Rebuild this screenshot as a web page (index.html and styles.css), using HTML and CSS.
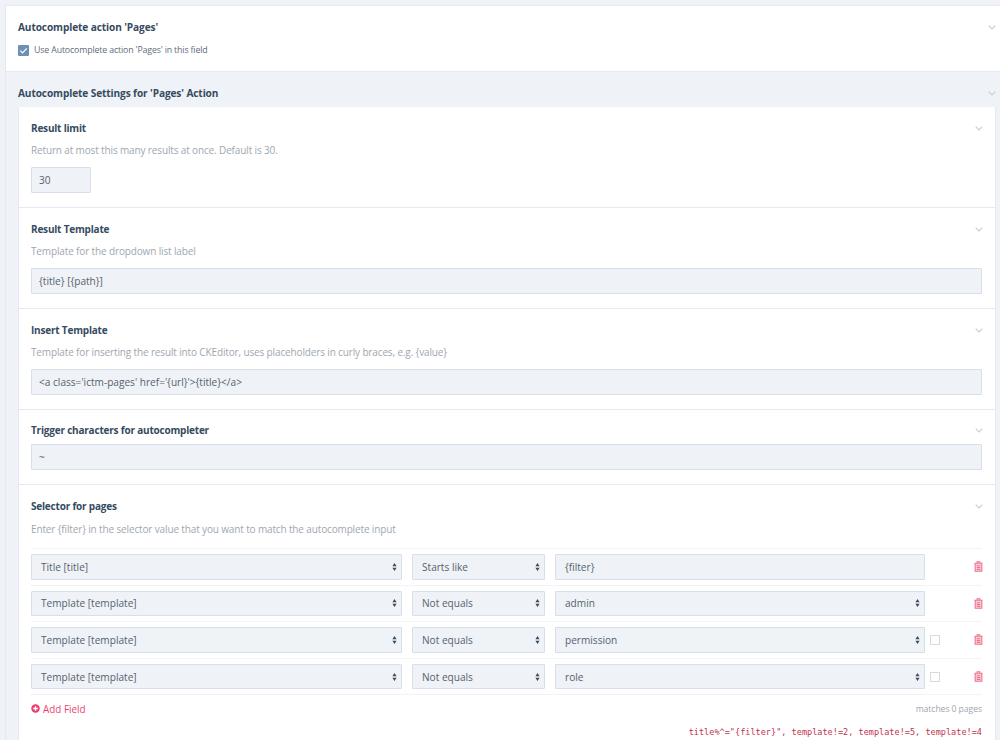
FILE: index.html
```html
<!DOCTYPE html>
<html lang="en">
<head>
<meta charset="utf-8">
<title>Autocomplete action 'Pages'</title>
<link rel="stylesheet" href="styles.css">
</head>
<body>
<svg class="defs" width="0" height="0" aria-hidden="true">
  <symbol id="chev" viewBox="0 0 8 5"><path d="M.7.7 4 3.9 7.3.7" fill="none" stroke="currentColor" stroke-width="1.1"/></symbol>
  <symbol id="sort" viewBox="0 0 6 10"><path d="M3 0 5.6 4H.4ZM3 10 .4 6h5.2Z" fill="currentColor"/></symbol>
  <symbol id="trash" viewBox="0 0 10 12"><path d="M1.3 2.6h7.4v8.6H1.3Z" fill="currentColor" fill-opacity=".3"/><path d="M3.5 1.8V.7h3v1.1M.5 2.3h9M1.3 2.6v8.6h7.4V2.6M3 5.2h4M3 7.2h4M3 9.2h4" fill="none" stroke="currentColor" stroke-width="1.2"/></symbol>
</svg>
<main class="page">
  <section class="panel panel-top">
    <header class="head"><h2>Autocomplete action 'Pages'</h2><svg class="chev"><use href="#chev"/></svg></header>
    <label class="check-line">
      <span class="check"><svg viewBox="0 0 12 12"><path d="M2.6 6.2 5 8.6l4.6-5" fill="none" stroke="#fff" stroke-width="1.3"/></svg></span>
      Use Autocomplete action 'Pages' in this field
    </label>
  </section>

  <section class="panel panel-settings">
    <header class="head head-settings"><h2>Autocomplete Settings for 'Pages' Action</h2><svg class="chev"><use href="#chev"/></svg></header>
    <div class="fields">
      <section class="field f-limit">
        <header class="head"><h3>Result limit</h3><svg class="chev"><use href="#chev"/></svg></header>
        <p class="desc">Return at most this many results at once. Default is 30.</p>
        <div class="input input-short">30</div>
      </section>
      <section class="field f-std">
        <header class="head"><h3>Result Template</h3><svg class="chev"><use href="#chev"/></svg></header>
        <p class="desc">Template for the dropdown list label</p>
        <div class="input">{title} [{path}]</div>
      </section>
      <section class="field f-std">
        <header class="head"><h3>Insert Template</h3><svg class="chev"><use href="#chev"/></svg></header>
        <p class="desc">Template for inserting the result into CKEditor, uses placeholders in curly braces, e.g. {value}</p>
        <div class="input">&lt;a class='ictm-pages' href='{url}'&gt;{title}&lt;/a&gt;</div>
      </section>
      <section class="field f-trigger">
        <header class="head"><h3>Trigger characters for autocompleter</h3><svg class="chev"><use href="#chev"/></svg></header>
        <div class="input">~</div>
      </section>
      <section class="field f-selector">
        <header class="head"><h3>Selector for pages</h3><svg class="chev"><use href="#chev"/></svg></header>
        <p class="desc">Enter {filter} in the selector value that you want to match the autocomplete input</p>
        <div class="rows">
          <div class="row">
            <div class="input select">Title [title]<svg class="sort"><use href="#sort"/></svg></div>
            <div class="input select">Starts like<svg class="sort"><use href="#sort"/></svg></div>
            <div class="input value">{filter}</div>
            <span></span>
            <svg class="trash"><use href="#trash"/></svg>
          </div>
          <div class="row">
            <div class="input select">Template [template]<svg class="sort"><use href="#sort"/></svg></div>
            <div class="input select">Not equals<svg class="sort"><use href="#sort"/></svg></div>
            <div class="input select value">admin<svg class="sort"><use href="#sort"/></svg></div>
            <span></span>
            <svg class="trash"><use href="#trash"/></svg>
          </div>
          <div class="row">
            <div class="input select">Template [template]<svg class="sort"><use href="#sort"/></svg></div>
            <div class="input select">Not equals<svg class="sort"><use href="#sort"/></svg></div>
            <div class="input select value">permission<svg class="sort"><use href="#sort"/></svg></div>
            <span class="box"></span>
            <svg class="trash"><use href="#trash"/></svg>
          </div>
          <div class="row">
            <div class="input select">Template [template]<svg class="sort"><use href="#sort"/></svg></div>
            <div class="input select">Not equals<svg class="sort"><use href="#sort"/></svg></div>
            <div class="input select value">role<svg class="sort"><use href="#sort"/></svg></div>
            <span class="box"></span>
            <svg class="trash"><use href="#trash"/></svg>
          </div>
        </div>
        <div class="foot">
          <a class="add"><svg viewBox="0 0 10 10"><circle cx="5" cy="5" r="4.7" fill="currentColor"/><path d="M5 2.4v5.2M2.4 5h5.2" stroke="#fff" stroke-width="1.5"/></svg>Add Field</a>
          <span class="matches">matches 0 pages</span>
        </div>
        <code class="selector">title%^="{filter}", template!=2, template!=5, template!=4</code>
      </section>
    </div>
  </section>
</main>
</body>
</html>
```
FILE: styles.css
```css
* { box-sizing: border-box; }
html, body { margin: 0; height: 740px; overflow: hidden; }
body {
  background: #eff2f7;
  color: #354b60;
  font-family: "Open Sans", "Noto Sans", sans-serif;
  font-size: 10px;
}
.defs { position: absolute; }
.page { height: 740px; padding: 5px 0 0 5px; }
.panel { border-top: 1px solid #e6e9ef; border-left: 1px solid #e6e9ef; }
.panel-top { background: #fff; height: 66px; padding: 12px 0 0 12px; }
.panel-settings { padding: 0 0 0 12px; height: 669px; }
.head { display: flex; justify-content: space-between; align-items: center; height: 20px; }
h2 { margin: 0; font-size: 10.1px; letter-spacing: -0.1px; font-weight: 700; color: #354b60; }
h3 { margin: 0; font-size: 10px; letter-spacing: -0.2px; font-weight: 700; color: #354b60; }
.chev { width: 8px; height: 5px; color: #c8ccd6; }
.panel-top .head .chev, .head-settings .chev { margin-right: 4px; }
.panel-top .head { height: 18px; }
.head-settings { height: 35px; padding-top: 7px; }
.check-line { display: flex; align-items: center; gap: 5px; margin-top: 8px; font-size: 8.8px; letter-spacing: -0.15px; color: #5f6d7b; }
.check { display: block; width: 11px; height: 11px; border-radius: 1px; background: #6e90b4; }
.check svg { display: block; width: 11px; height: 11px; }
.fields { width: 978px; height: 633px; background: #fff; border: 1px solid #e6e9ef; border-width: 0 1px; }
.field { padding: 11px 12px 0 12px; border-bottom: 1px solid #e6e9ef; }
.f-limit { height: 101px; }
.f-std { height: 101px; }
.f-trigger { height: 75px; padding-top: 10px; }
.desc { margin: 0 0 4px; padding-top: 3px; height: 25px; font-size: 10px; letter-spacing: -0.14px; line-height: 18px; color: #9ea7b1; }
.input {
  display: flex; align-items: center;
  height: 25.5px; padding: 0 7px;
  background: #eff2f7;
  border: 1px solid #d6dfea;
  border-radius: 1px;
  font-size: 10.1px;
  color: #56626e;
}
.input-short { width: 60px; }
.f-std .input, .f-trigger .input { width: 951px; }
.f-trigger .head { margin-bottom: 4px; }
.f-selector { height: 255px; border-bottom: 0; }
.f-selector .desc { margin: 1px 0 0; }
.select { justify-content: space-between; padding: 0 4px 0 9px; }
.value { padding-left: 9px; }
.sort { width: 5px; height: 8px; color: #3c4d5f; }
.rows { width: 951px; margin-top: 6px; border-top: 1px solid #f1f3f6; }
.row {
  display: grid;
  grid-template-columns: 371px 133px 370px 10px 1fr;
  column-gap: 10px;
  align-items: center;
  height: 36.6px;
  border-bottom: 1px solid #f1f3f6;
}
.row > :nth-child(4) { margin-left: -5px; }
.box { display: block; width: 10px; height: 10px; border: 1px solid #d8dadd; background: #fff; }
.trash { width: 9px; height: 11px; justify-self: end; color: #ee6f8d; margin-right: -1px; }
.foot { width: 951px; display: flex; justify-content: space-between; align-items: center; height: 27px; }
.add { display: flex; align-items: center; gap: 3px; font-size: 9.9px; color: #eb3f6e; }
.add svg { width: 9px; height: 9px; }
.matches { font-size: 8.7px; letter-spacing: -0.1px; color: #9ea7b1; }
.selector {
  display: block; width: 951px; margin-top: 5px;
  text-align: right; font-family: "DejaVu Sans Mono", monospace; font-size: 8.55px; color: #c0344d;
}
```
